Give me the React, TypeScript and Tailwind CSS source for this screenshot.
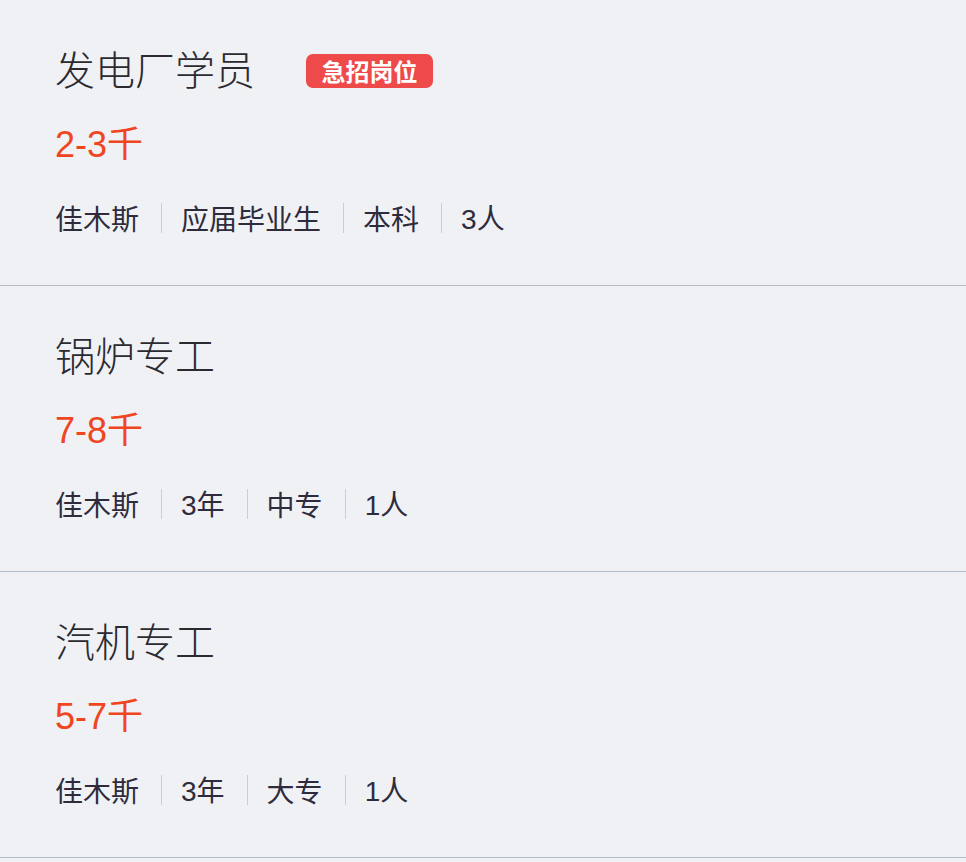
import React from "react";

type Job = {
  title: string;
  urgent?: boolean;
  salary: string;
  meta: string[];
};

const jobs: Job[] = [
  { title: "发电厂学员", urgent: true, salary: "2-3千", meta: ["佳木斯", "应届毕业生", "本科", "3人"] },
  { title: "锅炉专工", salary: "7-8千", meta: ["佳木斯", "3年", "中专", "1人"] },
  { title: "汽机专工", salary: "5-7千", meta: ["佳木斯", "3年", "大专", "1人"] },
];

const font = { fontFamily: '"Noto Sans CJK SC", "Liberation Sans", sans-serif' };
const latin = { fontFamily: '"Liberation Sans", "Noto Sans CJK SC", sans-serif' };

function MetaText({ text }: { text: string }) {
  const m = text.match(/^(\d+)(.*)$/);
  if (!m) return <>{text}</>;
  return (
    <>
      <span style={latin}>{m[1]}</span>
      {m[2]}
    </>
  );
}

function Card({ job }: { job: Job }) {
  return (
    <div className="flex h-[286px] flex-col border-b border-[#b2bdca] pl-[55px] pt-[44px]">
      <div className="flex h-[48px] items-center">
        <span className="text-[40px] leading-[48px] font-light text-[#2a2a30]">{job.title}</span>
        {job.urgent && (
          <span className="ml-[51px] mt-[5px] flex h-[34px] w-[127px] items-center justify-center rounded-[7px] bg-[#ee4a4a] text-[24px] font-bold leading-none text-white">
            急招岗位
          </span>
        )}
      </div>
      <div className="mt-[31px] h-[44px] text-[36px] leading-[44px] text-[#ef4520]" style={latin}>
        {job.salary}
      </div>
      <div className="mt-[33px] flex h-[36px] items-center text-[#2e2c3c]">
        {job.meta.map((m, i) => (
          <React.Fragment key={i}>
            {i > 0 && <span className="ml-[22px] mr-[19px] h-[30px] w-px bg-[#c9ced6]" />}
            <span className="text-[28px] leading-[36px]">
              <MetaText text={m} />
            </span>
          </React.Fragment>
        ))}
      </div>
    </div>
  );
}

export default function App() {
  return (
    <div className="h-[862px] w-[966px] overflow-hidden bg-[#f0f1f4]" style={font}>
      {jobs.map((j, i) => (
        <Card key={i} job={j} />
      ))}
    </div>
  );
}
